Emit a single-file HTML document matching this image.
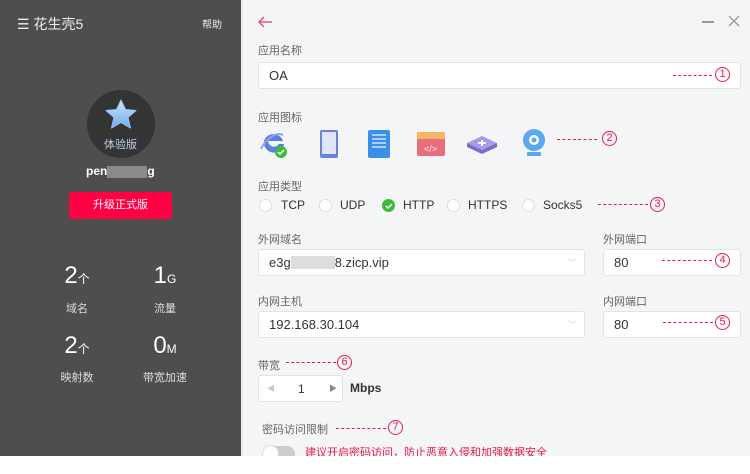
<!DOCTYPE html>
<html><head><meta charset="utf-8"><style>
*{margin:0;padding:0;box-sizing:border-box}
body{width:750px;height:474px;background:#fff;position:relative;overflow:hidden;font-family:"Liberation Sans","Noto Sans CJK SC",sans-serif}
.a{position:absolute;white-space:nowrap}
#left{position:absolute;left:0;top:0;width:241px;height:456px;background:#4e4e4e}
#right{position:absolute;left:243px;top:0;width:507px;height:456px;background:#f4f5f7;overflow:hidden}
.lbl{position:absolute;font-size:11px;color:#666}
.inp{position:absolute;background:#fff;border:1px solid #e2e3e6;border-radius:3px;font-size:13px;color:#333;padding-left:10px;display:flex;align-items:center}
.dash{position:absolute;border-top:1px dashed #e8194a;height:0}
.num{position:absolute;width:15px;height:15px;border:1px solid #e8194a;border-radius:50%;color:#e8194a;font-size:11px;text-align:center;line-height:13px}
.rad{position:absolute;width:13px;height:13px;border-radius:50%;background:#fff;border:1px solid #ddd}
.rt{position:absolute;font-size:12px;color:#333}
.st{position:absolute;color:#fff;font-size:24px;text-align:center}
.st small{font-size:12px}
.sl{position:absolute;color:#ddd;font-size:11px;text-align:center}
</style></head><body>
<div id="left">
<div class="a" style="left:17px;top:14px;color:#eee;font-size:14px">☰ 花生壳5</div>
<div class="a" style="left:202px;top:16px;color:#eee;font-size:10px">帮助</div>
<div class="a" style="left:87px;top:90px;width:68px;height:68px;border-radius:50%;background:#343434"></div>
<svg class="a" style="left:104px;top:98px" width="34" height="32" viewBox="0 0 34 32"><defs><linearGradient id="g" x1="0" y1="0" x2="0" y2="1"><stop offset="0" stop-color="#cfe6ff"/><stop offset="1" stop-color="#6ea8ee"/></linearGradient></defs><path d="M17 2 L21.5 11.5 L32 12.5 L24 19.5 L26.5 30 L17 24.5 L7.5 30 L10 19.5 L2 12.5 L12.5 11.5 Z" fill="url(#g)" stroke="#9cc6f5" stroke-linejoin="round"/></svg>
<div class="a" style="left:104px;top:136px;color:#b9cfe8;font-size:11px">体验版</div>
<div class="a" style="left:86px;top:164px;color:#fff;font-size:12px;font-weight:bold">pen<span style="display:inline-block;width:40px;height:12px;background:#8a8a8a;vertical-align:middle"></span>g</div>
<div class="a" style="left:69px;top:192px;width:103px;height:27px;background:#fe0043;border-radius:3px;color:#fff;font-size:11px;text-align:center;line-height:27px">升级正式版</div>
<div class="st" style="left:62px;top:262px;width:30px">2<small>个</small></div>
<div class="st" style="left:150px;top:262px;width:30px">1<small>G</small></div>
<div class="sl" style="left:57px;top:300px;width:40px">域名</div>
<div class="sl" style="left:145px;top:300px;width:40px">流量</div>
<div class="st" style="left:62px;top:332px;width:30px">2<small>个</small></div>
<div class="st" style="left:148px;top:332px;width:34px">0<small>M</small></div>
<div class="sl" style="left:52px;top:369px;width:50px">映射数</div>
<div class="sl" style="left:135px;top:369px;width:60px">带宽加速</div>
</div>
<div class="a" style="left:241px;top:0;width:2px;height:456px;background:#e8e8e8"></div>
<div id="right">
<svg class="a" style="left:14px;top:15px" width="16" height="14"><path d="M15 7H2M7 2L2 7l5 5" stroke="#e8557a" stroke-width="1.5" fill="none"/></svg>
<div class="a" style="left:459px;top:21px;width:12px;height:1.5px;background:#999"></div>
<svg class="a" style="left:485px;top:15px" width="12" height="12"><path d="M1 1L11 11M11 1L1 11" stroke="#999" stroke-width="1.3"/></svg>
<div class="lbl" style="left:15px;top:42px">应用名称</div>
<div class="inp" style="left:15px;top:62px;width:483px;height:27px">OA</div>
<div class="dash" style="left:430px;top:75px;width:39px"></div><div class="num" style="left:472px;top:67px">1</div>
<div class="lbl" style="left:15px;top:109px">应用图标</div>
<svg class="a" style="left:15px;top:127px" width="300" height="34">
<path d="M6 14a10 10 0 0 1 19 0H10a6 6 0 0 0 11 3h5a10 10 0 0 1-20-3z" fill="#5b7ee0"/><path d="M3 22c4-9 15-18 22-14" stroke="#8aa6f0" stroke-width="2" fill="none"/><circle cx="23" cy="25" r="6" fill="#3dbb3d"/><path d="M20 25l2 2 4-4" stroke="#fff" stroke-width="1.5" fill="none"/>
<rect x="62" y="3" width="18" height="28" rx="2" fill="#6b83d6"/><rect x="64" y="5" width="14" height="22" fill="#dfe6fb"/>
<rect x="110" y="3" width="22" height="28" rx="2" fill="#3a8fe6"/><g stroke="#cfe4fb" stroke-width="1.5"><path d="M114 8h14M114 12h14M114 16h14M114 20h14"/></g>
<rect x="159" y="5" width="28" height="24" rx="2" fill="#ea6d7c"/><rect x="159" y="5" width="28" height="7" fill="#f8b567"/><text x="166" y="25" font-size="9" fill="#fff" font-family="Liberation Sans">&lt;/&gt;</text>
<path d="M224 9l15 7-15 7-15-7z" fill="#a89ae8"/><path d="M209 16v4l15 7 15-7v-4l-15 7z" fill="#7b6cc8"/><path d="M220 16h8M224 13v6" stroke="#fff" stroke-width="2"/>
<circle cx="276" cy="13" r="11" fill="#5ba8ee"/><circle cx="276" cy="13" r="5" fill="#fff"/><circle cx="276" cy="13" r="2.5" fill="#5ba8ee"/><rect x="269" y="25" width="14" height="4" rx="1" fill="#5ba8ee"/>
</svg>
<div class="dash" style="left:314px;top:139px;width:40px"></div><div class="num" style="left:359px;top:131px">2</div>
<div class="lbl" style="left:15px;top:178px">应用类型</div>
<div class="rad" style="left:16px;top:199px"></div><div class="rt" style="left:38px;top:198px">TCP</div>
<div class="rad" style="left:76px;top:199px"></div><div class="rt" style="left:97px;top:198px">UDP</div>
<div class="rad" style="left:139px;top:199px;background:#3dbb3d;border-color:#3dbb3d"></div><svg class="a" style="left:142px;top:203px" width="8" height="6"><path d="M1 3l2 2 4-4" stroke="#fff" stroke-width="1.4" fill="none"/></svg><div class="rt" style="left:160px;top:198px">HTTP</div>
<div class="rad" style="left:204px;top:199px"></div><div class="rt" style="left:225px;top:198px">HTTPS</div>
<div class="rad" style="left:279px;top:199px"></div><div class="rt" style="left:300px;top:198px">Socks5</div>
<div class="dash" style="left:355px;top:204px;width:50px"></div><div class="num" style="left:407px;top:197px">3</div>
<div class="lbl" style="left:15px;top:231px">外网域名</div>
<div class="inp" style="left:15px;top:249px;width:327px;height:27px">e3g<span style="display:inline-block;width:44px;height:13px;background:#ddd"></span>8.zicp.vip</div>
<div class="a" style="left:325px;top:256px;color:#ccc;font-size:9px">﹀</div>
<div class="lbl" style="left:360px;top:231px">外网端口</div>
<div class="inp" style="left:360px;top:249px;width:138px;height:27px">80</div>
<div class="dash" style="left:419px;top:260px;width:50px"></div><div class="num" style="left:472px;top:253px">4</div>
<div class="lbl" style="left:15px;top:293px">内网主机</div>
<div class="inp" style="left:15px;top:311px;width:327px;height:27px">192.168.30.104</div>
<div class="a" style="left:325px;top:318px;color:#ccc;font-size:9px">﹀</div>
<div class="lbl" style="left:360px;top:293px">内网端口</div>
<div class="inp" style="left:360px;top:311px;width:138px;height:27px">80</div>
<div class="dash" style="left:420px;top:322px;width:50px"></div><div class="num" style="left:472px;top:315px">5</div>
<div class="lbl" style="left:15px;top:357px">带宽</div>
<div class="dash" style="left:43px;top:362px;width:50px"></div><div class="num" style="left:94px;top:355px">6</div>
<div class="inp" style="left:15px;top:375px;width:85px;height:27px;padding:0"><span style="position:absolute;left:8px;color:#ccc;font-size:8px">◀</span><span style="position:absolute;left:39px;font-size:12px">1</span><span style="position:absolute;left:70px;color:#888;font-size:8px">▶</span></div>
<div class="a" style="left:107px;top:381px;font-size:12px;color:#333;font-weight:bold">Mbps</div>
<div class="lbl" style="left:19px;top:421px">密码访问限制</div>
<div class="dash" style="left:93px;top:428px;width:50px"></div><div class="num" style="left:145px;top:420px">7</div>
<div class="a" style="left:20px;top:446px;width:32px;height:16px;border-radius:8px;background:#ccc"></div>
<div class="a" style="left:19px;top:445px;width:17px;height:17px;border-radius:50%;background:#fff;border:1px solid #ddd"></div>
<div class="a" style="left:62px;top:444px;font-size:11px;color:#e8194a">建议开启密码访问，防止恶意入侵和加强数据安全</div>
</div>
</body></html>
